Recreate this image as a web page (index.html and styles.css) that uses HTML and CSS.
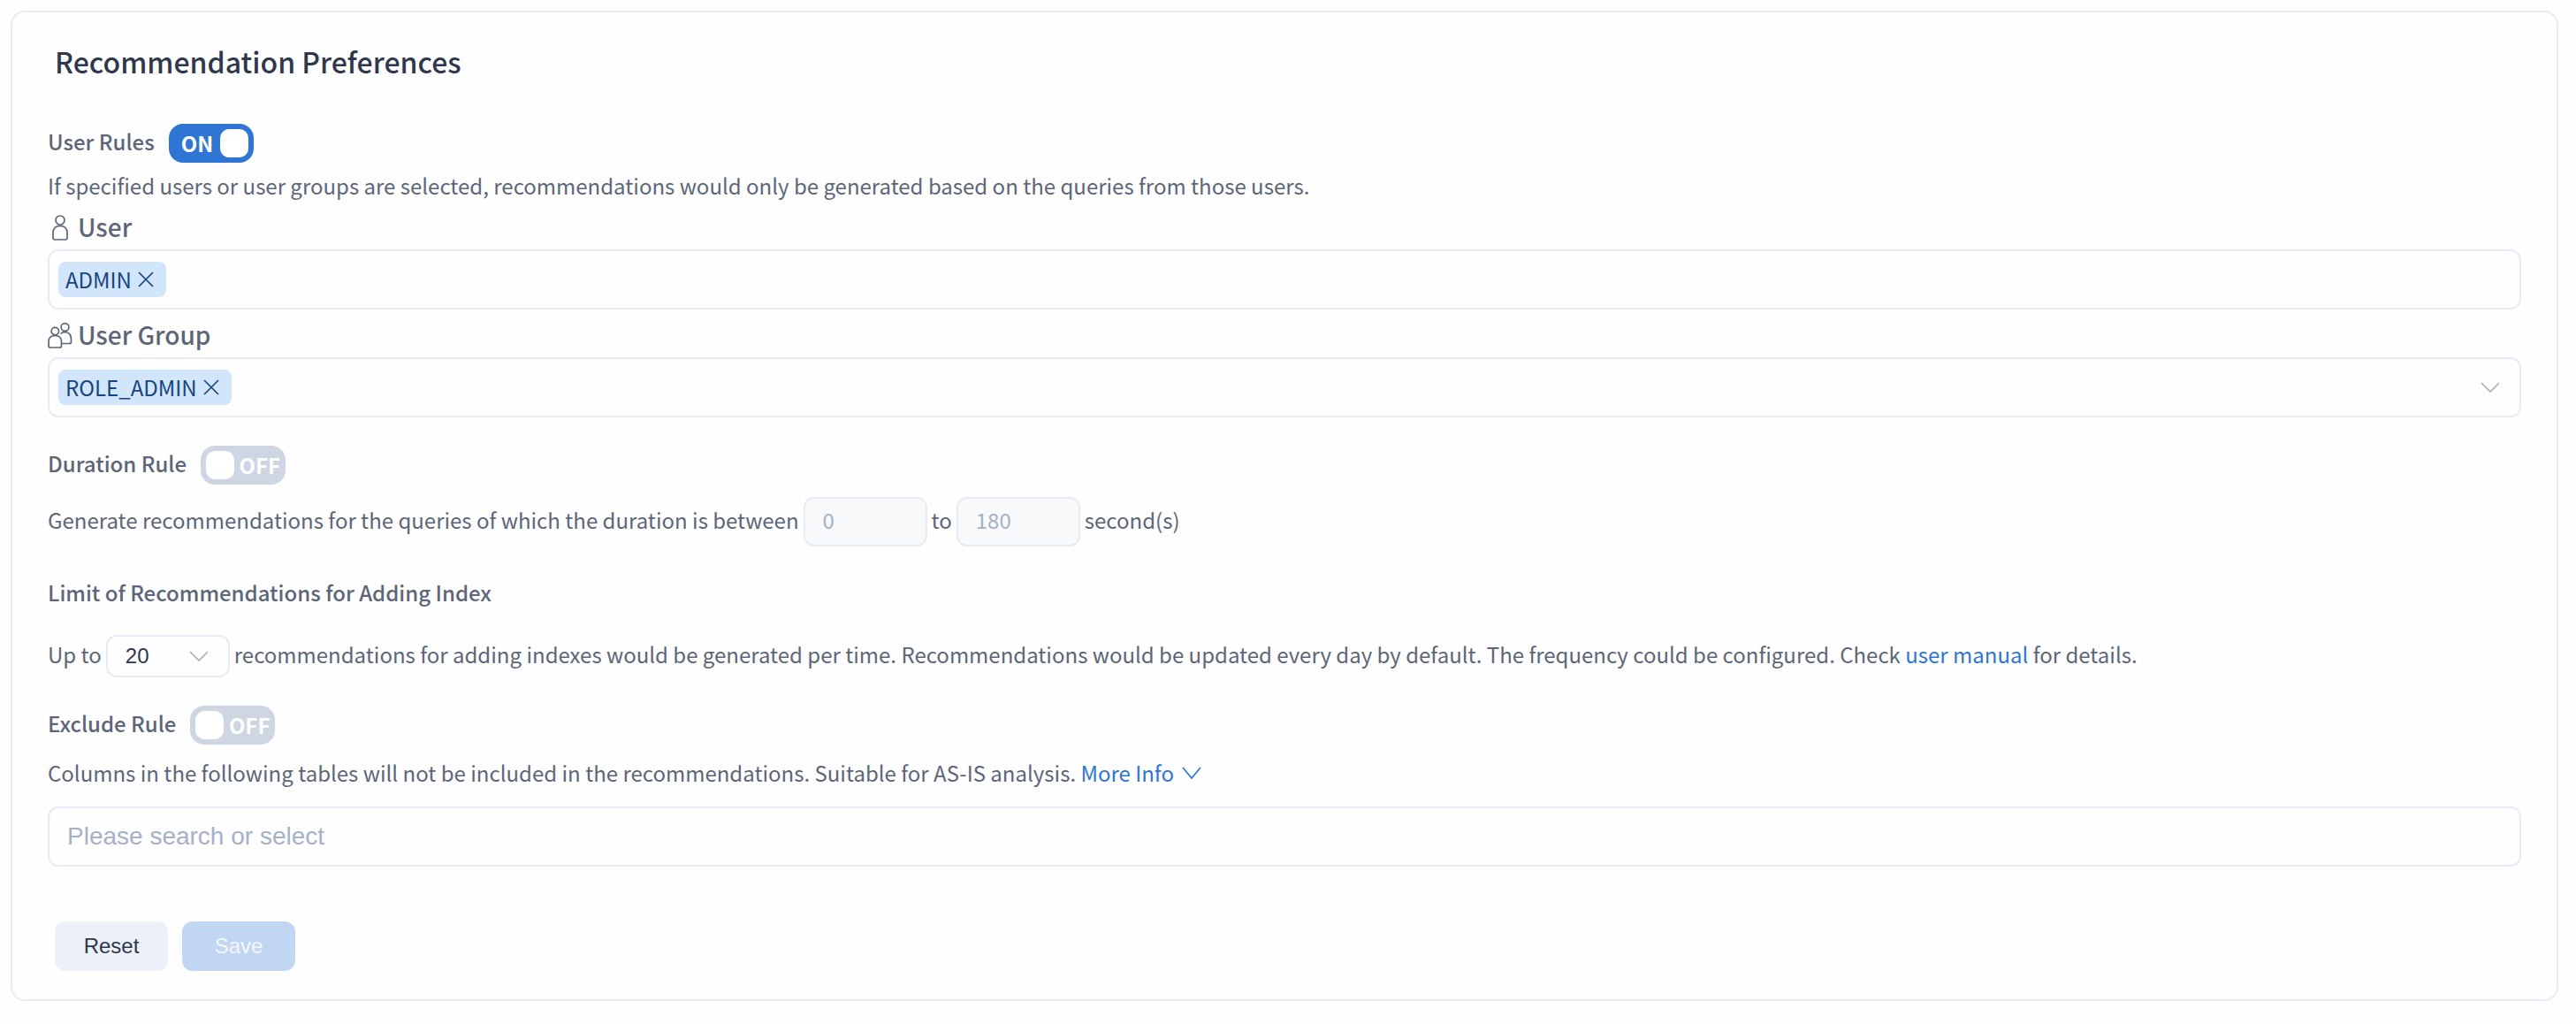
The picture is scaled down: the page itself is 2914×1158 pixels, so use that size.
FILE: index.html
```
<!DOCTYPE html>
<html lang="en">
<head>
<meta charset="utf-8">
<title>Recommendation Preferences</title>
<link rel="stylesheet" href="styles.css">
</head>
<body>
<main class="card">
  <h1 class="card-title">Recommendation Preferences</h1>
  <form class="card-body">

    <section class="rule">
      <div class="rule-head">
        <h2 class="rule-title" id="user-rules">User Rules</h2>
        <label class="switch">
          <span class="switch-text">ON</span>
          <input class="switch-knob" type="checkbox" role="switch" aria-labelledby="user-rules" checked>
        </label>
      </div>
      <p class="rule-text rule-text-near">If specified users or user groups are selected, recommendations would only be generated based on the queries from those users.</p>

      <label class="field-label" for="user-field">
        <svg class="field-icon" viewBox="0 0 28 40" aria-hidden="true">
          <circle cx="14" cy="13" r="5"/>
          <path d="M6 32.500V27.500C6 22.500 9 19.500 14 19.500S22 22.500 22 27.500V32.500Q22 35 19.500 35H8.500Q6 35 6 32.500Z"/>
        </svg>
        User
      </label>
      <div class="field">
        <span class="tag">ADMIN
          <button class="tag-close" type="button" aria-label="Remove ADMIN"><svg viewBox="0 0 18 18" aria-hidden="true"><path d="M1 1L17 17M17 1L1 17"/></svg></button>
        </span>
        <input class="field-input" id="user-field" type="text">
      </div>

      <label class="field-label field-label-next" for="group-field">
        <svg class="field-icon" viewBox="0 0 28 40" aria-hidden="true">
          <circle cx="19.500" cy="12" r="4.400"/>
          <circle cx="8.300" cy="16.500" r="4.200"/>
          <path d="M14.500 19.500Q16.500 17.500 19.500 17.500Q26.500 18 26.500 25.500V28.500Q26.500 30.500 24.500 30.500H16"/>
          <path d="M1 33V28.500Q1 21.500 8.300 21.500T15.500 28.500V33Q15.500 35 13.500 35H3Q1 35 1 33Z"/>
        </svg>
        User Group
      </label>
      <div class="field">
        <span class="tag">ROLE_ADMIN
          <button class="tag-close" type="button" aria-label="Remove ROLE_ADMIN"><svg viewBox="0 0 18 18" aria-hidden="true"><path d="M1 1L17 17M17 1L1 17"/></svg></button>
        </span>
        <input class="field-input" id="group-field" type="text">
        <svg class="chevron" viewBox="0 0 22 12" aria-hidden="true"><path d="M1 1L11 11L21 1"/></svg>
      </div>
    </section>

    <section class="rule">
      <div class="rule-head">
        <h2 class="rule-title" id="duration-rule">Duration Rule</h2>
        <label class="switch">
          <input class="switch-knob" type="checkbox" role="switch" aria-labelledby="duration-rule">
          <span class="switch-text">OFF</span>
        </label>
      </div>
      <div class="sentence">
        <span>Generate recommendations for the queries of which the duration is between</span>
        <input class="number" type="text" value="0" aria-label="Minimum duration" disabled>
        <span>to</span>
        <input class="number" type="text" value="180" aria-label="Maximum duration" disabled>
        <span>second(s)</span>
      </div>
    </section>

    <section class="rule">
      <h2 class="rule-title">Limit of Recommendations for Adding Index</h2>
      <div class="sentence sentence-far">
        <label for="limit">Up to</label>
        <span class="select-box">
          <select class="select" id="limit"><option>20</option><option>30</option><option>40</option></select>
          <svg class="chevron" viewBox="0 0 22 12" aria-hidden="true"><path d="M1 1L11 11L21 1"/></svg>
        </span>
        <span>recommendations for adding indexes would be generated per time. Recommendations would be updated every day by default. The frequency could be configured. Check <a class="link" href="#manual">user manual</a> for details.</span>
      </div>
    </section>

    <section class="rule">
      <div class="rule-head">
        <h2 class="rule-title" id="exclude-rule">Exclude Rule</h2>
        <label class="switch">
          <input class="switch-knob" type="checkbox" role="switch" aria-labelledby="exclude-rule">
          <span class="switch-text">OFF</span>
        </label>
      </div>
      <p class="rule-text">Columns in the following tables will not be included in the recommendations. Suitable for AS-IS analysis. <button class="more" type="button">More Info<svg class="more-icon" viewBox="0 0 22 14" aria-hidden="true"><path d="M1 1L11 13L21 1"/></svg></button></p>
      <input class="field search" type="text" placeholder="Please search or select" aria-label="Excluded tables">
    </section>

    <div class="actions">
      <button class="button" type="reset">Reset</button>
      <button class="button button-primary" type="submit" disabled>Save</button>
    </div>
  </form>
</main>
</body>
</html>
```
FILE: styles.css
```
* {
  box-sizing: border-box;
}

body {
  margin: 12px 20px 26px 12px;
  background: #fefefe;
  color: #5c6678;
  font: 24px/36px "Noto Sans CJK SC", "Noto Sans", sans-serif;
}

h1,
h2,
p {
  margin: 0;
}

button,
input,
select {
  margin: 0;
  font: inherit;
}

svg {
  display: block;
  fill: none;
  stroke: currentColor;
  stroke-width: 1.7;
}

.card {
  padding: 32px 40px;
  border: 2px solid #e6ebf5;
  border-radius: 16px;
}

.card-title {
  padding: 0 8px;
  color: #2f374d;
  font-size: 32px;
  font-weight: 500;
  line-height: 46px;
}

.card-body {
  display: flex;
  flex-direction: column;
  gap: 32px;
  margin-top: 48px;
}

.rule-head {
  display: flex;
  align-items: flex-start;
  gap: 16px;
}

.rule-title {
  font-size: 24px;
  font-weight: 500;
  line-height: 40px;
}

.rule-text {
  margin: 14px 0 20px;
}

.rule-text-near {
  margin: 8px 0;
}

/* Switches */
.switch {
  display: flex;
  align-items: center;
  justify-content: space-between;
  width: 96px;
  height: 44px;
  padding: 0 6px;
  border-radius: 16px;
  background: #ced5e3;
  color: #fff;
  font-weight: 700;
  line-height: 44px;
}

.switch:has(:checked) {
  padding-left: 14px;
  background: #2f76d4;
}

.switch-knob {
  appearance: none;
  width: 32px;
  height: 32px;
  border-radius: 10px;
  background: #fff;
}

/* Bordered fields with tags */
.field-label {
  display: flex;
  align-items: center;
  gap: 6px;
  margin-bottom: 6px;
  font-size: 28px;
  font-weight: 500;
  line-height: 40px;
}

.field-label-next {
  margin-top: 8px;
}

.field-icon {
  width: 28px;
  height: 40px;
}

.field {
  display: flex;
  align-items: center;
  gap: 8px;
  width: 100%;
  height: 68px;
  padding: 0 22px 0 10px;
  border: 2px solid #e6ebf5;
  border-radius: 12px;
  background: #fefefe;
}

.field-input {
  flex: 1;
  min-width: 0;
  border: 0;
  outline: 0;
  background: none;
}

.tag {
  display: flex;
  align-items: center;
  gap: 7px;
  padding: 0 14px 0 8px;
  border-radius: 8px;
  background: #d2e6fb;
  color: #19457f;
  line-height: 40px;
}

.tag-close {
  width: 18px;
  height: 18px;
  padding: 0;
  border: 0;
  background: none;
  color: inherit;
}

.chevron {
  width: 22px;
  height: 12px;
  color: #a5b1c5;
}

.search {
  padding: 0 20px;
  font: 28px "Liberation Sans", Arial, sans-serif;
}

.search::placeholder {
  color: #a5b1c5;
}

/* Sentences with controls inside */
.sentence {
  display: flex;
  align-items: baseline;
  gap: 5px;
  margin-top: 14px;
}

.sentence-far {
  margin-top: 28px;
}

.number {
  width: 140px;
  height: 56px;
  padding: 0 20px 6px;
  border: 2px solid #e6ebf5;
  border-radius: 12px;
  background: #f8f9fb;
  color: #a5b1c5;
}

.select-box {
  display: grid;
  grid-template-columns: 1fr 46px;
  align-items: center;
  width: 140px;
}

.select {
  grid-area: 1 / 1 / 2 / 3;
  height: 48px;
  padding: 0 20px 2px;
  appearance: none;
  border: 2px solid #e6ebf5;
  border-radius: 12px;
  background: #fefefe;
  color: #2f374d;
  font: 24px "Liberation Sans", Arial, sans-serif;
}

.select-box .chevron {
  grid-area: 1 / 2;
  pointer-events: none;
}

.link,
.more {
  color: #2f76d4;
  text-decoration: none;
}

.more {
  display: inline-flex;
  align-items: center;
  gap: 9px;
  padding: 0;
  border: 0;
  background: none;
}

.more-icon {
  width: 22px;
  height: 14px;
}

.actions {
  display: flex;
  gap: 16px;
  margin-top: 30px;
  padding: 0 8px;
}

.button {
  width: 128px;
  height: 56px;
  border: 0;
  border-radius: 12px;
  background: #ecf0f8;
  color: #2f374d;
  font: 24px "Liberation Sans", Arial, sans-serif;
}

.button-primary {
  background: #c1d6f2;
  color: #f4f8fd;
}
```
